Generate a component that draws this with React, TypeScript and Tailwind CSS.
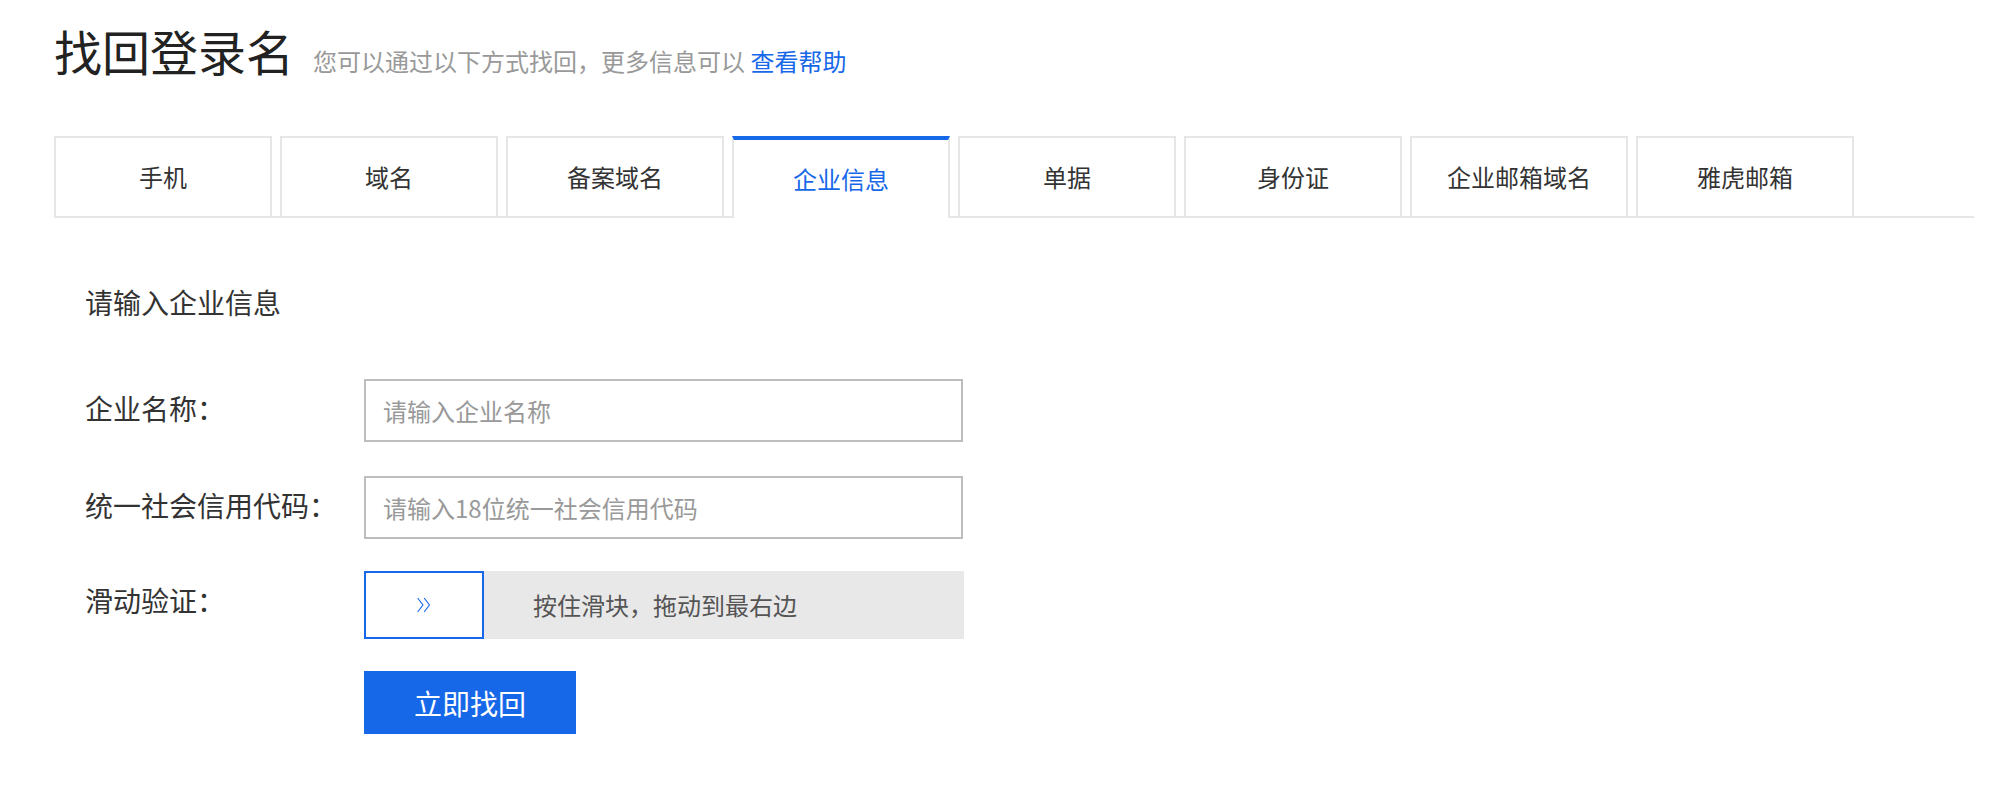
import React from "react";

const tabs = ["手机", "域名", "备案域名", "企业信息", "单据", "身份证", "企业邮箱域名", "雅虎邮箱"];

function Chevrons() {
  return (
    <svg width="18" height="16" viewBox="0 0 18 16" fill="none" stroke="#1768e8" strokeWidth="1.2" strokeLinecap="round" strokeLinejoin="round">
      <path d="M3 1.5 L8 8 L3 14.5" />
      <path d="M9.5 1.5 L14.5 8 L9.5 14.5" />
    </svg>
  );
}

export default function App() {
  return (
    <div className="min-h-screen bg-white font-['Noto_Sans_CJK_SC','Noto_Sans',sans-serif]">
      <div className="pl-[54px] pr-[26px] pt-[26px]">
        <div className="flex items-baseline">
          <h1 className="text-[48px] leading-[48px] text-[#222] font-normal">找回登录名</h1>
          <p className="ml-[19px] text-[24px] leading-[24px] text-[#999]">
            您可以通过以下方式找回，更多信息可以{" "}
            <a className="text-[#1768e8] cursor-pointer">查看帮助</a>
          </p>
        </div>

        <div className="mt-[62px] flex gap-[8px] border-b-2 border-[#e6e6e6]">
          {tabs.map((t) => {
            const active = t === "企业信息";
            return active ? (
              <div
                key={t}
                className="w-[218px] h-[82px] -mb-[2px] flex items-center justify-center bg-white border-x-2 border-t-4 border-x-[#e6e6e6] border-t-[#1768e8] text-[24px] text-[#1768e8]"
              >
                {t}
              </div>
            ) : (
              <div
                key={t}
                className="w-[218px] h-[80px] flex items-center justify-center bg-white border-x-2 border-t-2 border-[#e6e6e6] text-[24px] text-[#333]"
              >
                {t}
              </div>
            );
          })}
        </div>

        <div className="pl-[31px]">
          <div className="mt-[70px] text-[28px] leading-[28px] text-[#333]">请输入企业信息</div>

          <div className="mt-[63px] flex flex-col">
            <div className="flex items-start">
              <label className="w-[279px] text-[28px] leading-[58px] text-[#333]">企业名称：</label>
              <input
                className="w-[599px] h-[63px] border-2 border-[#bdbdbd] px-[17px] text-[24px] text-[#333] placeholder:text-[#999] outline-none"
                placeholder="请输入企业名称"
              />
            </div>
            <div className="mt-[34px] flex items-start">
              <label className="w-[279px] text-[28px] leading-[58px] text-[#333]">统一社会信用代码：</label>
              <input
                className="w-[599px] h-[63px] border-2 border-[#bdbdbd] px-[17px] text-[24px] text-[#333] placeholder:text-[#999] outline-none"
                placeholder="请输入18位统一社会信用代码"
              />
            </div>
            <div className="mt-[32px] flex items-start">
              <label className="w-[279px] text-[28px] leading-[58px] text-[#333]">滑动验证：</label>
              <div className="w-[600px] h-[68px] flex items-center bg-[#e8e8e8]">
                <div className="w-[120px] h-full flex items-center justify-center bg-white border-2 border-[#1768e8]">
                  <Chevrons />
                </div>
                <span className="pl-[49px] text-[24px] text-[#555]">按住滑块，拖动到最右边</span>
              </div>
            </div>
            <div className="mt-[32px] flex">
              <div className="w-[279px]" />
              <button className="w-[212px] h-[63px] bg-[#1768e8] text-white text-[28px] flex items-center justify-center">
                立即找回
              </button>
            </div>
          </div>
        </div>
      </div>
    </div>
  );
}
